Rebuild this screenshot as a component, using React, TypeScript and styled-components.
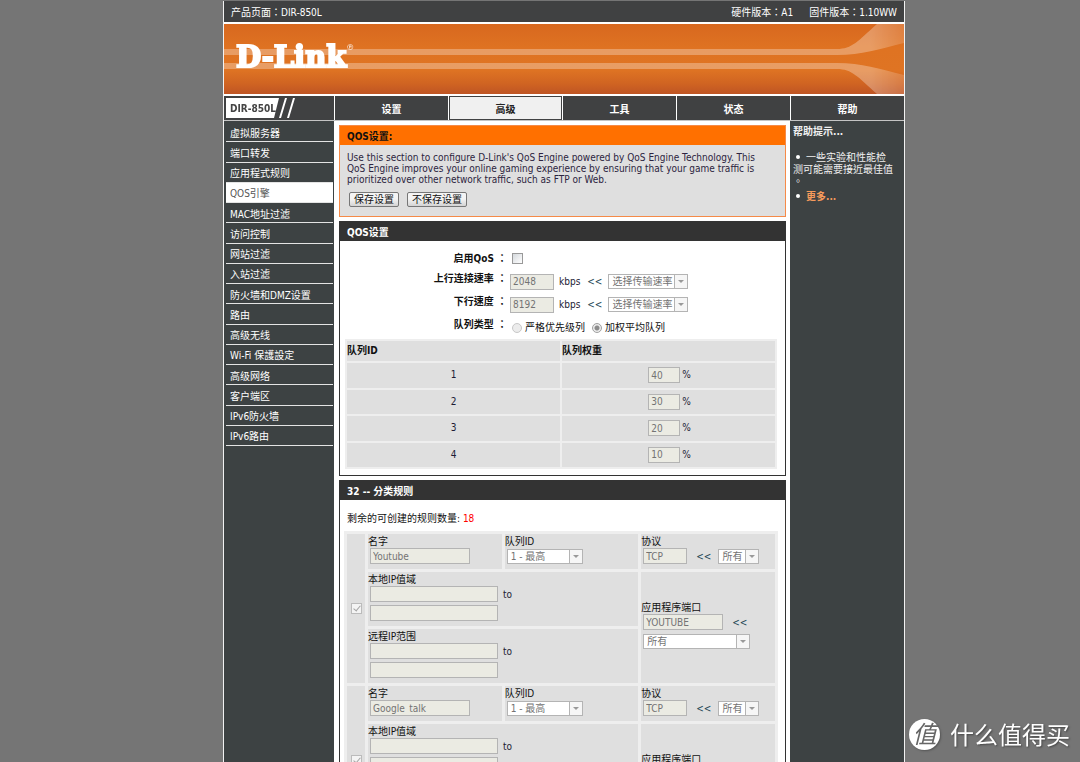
import React from "react";
import styled, { createGlobalStyle, css } from "styled-components";

const latin = '"DejaVu Sans Condensed", "DejaVu Sans"';
const fontSC = `${latin}, "Noto Sans CJK SC", sans-serif`;
const fontTC = `${latin}, "Noto Sans CJK TC", sans-serif`;

const colors = {
  page: "#757575",
  dark: "#404142",
  side: "#3d4243",
  heading: "#333333",
  orange: "#ff7000",
  orangeEdge: "#f58a48",
  panel: "#dfdfdf",
  tableEdge: "#eeeeee",
  field: "#ebebe3",
  fieldEdge: "#b4b4b4",
  muted: "#737373",
};

const GlobalStyle = createGlobalStyle`
  * { box-sizing: border-box; }
  html, body { margin: 0; padding: 0; background: ${colors.page}; }
  body, button, input, select {
    font-family: ${fontSC};
    font-size: 10px;
    line-height: 12px;
  }
`;

const Screen = styled.div`
  height: 100vh;
  overflow-y: auto;
  scrollbar-width: none;
  padding: 1px 0 0 48px;
`;

const Shell = styled.div`
  width: 100%;
  max-width: 682px;
  min-height: 100%;
  margin: 0 auto;
  display: flex;
  flex-direction: column;
  background: #fff;
  border: solid #f2f2f2;
  border-width: 0 1px;
`;

const TopBar = styled.header`
  display: flex;
  align-items: center;
  height: 21px;
  padding: 2px 7px 0;
  gap: 16px;
  background: ${colors.dark};
  color: #fff;
  font-family: ${fontTC};
`;

const Product = styled.span`
  flex: 1;
`;

const Banner = styled.div`
  position: relative;
  height: 70px;
  margin: 2px 0;
  background: linear-gradient(#d8681f 0%, #df7322 35%, #df7423 65%, #d06422 85%, #bf5524 100%);
`;

const Swoosh = styled.svg`
  position: absolute;
  inset: 0;
  width: 100%;
  height: 100%;
`;

const Logo = styled.a`
  position: relative;
  display: inline-flex;
  align-items: flex-start;
  padding: 15px 0 0 12px;
  color: #fff;
  text-decoration: none;
  font-family: "DejaVu Serif", serif;
  font-weight: 700;
  font-size: 29px;
  line-height: 36px;
  -webkit-text-stroke: 2px #fff;
`;

const Registered = styled.sup`
  font-size: 8px;
  line-height: 18px;
  font-weight: 400;
  -webkit-text-stroke: 0;
`;

const Nav = styled.nav`
  display: grid;
  grid-template-columns: 110px repeat(5, 1fr);
  column-gap: 1px;
  height: 24px;
  background: #fff;
`;

const Model = styled.div`
  position: relative;
  background: ${colors.dark};
  display: flex;
  align-items: center;
`;

const ModelShape = styled.svg`
  position: absolute;
  left: 0;
  top: 0;
`;

const ModelName = styled.span`
  position: relative;
  padding: 1px 0 0 6px;
  color: #444;
  font-weight: 700;
`;

const NavLink = styled.a<{ $active?: boolean }>`
  display: flex;
  align-items: center;
  justify-content: center;
  padding-top: 3px;
  border: 1px solid ${colors.dark};
  background: ${(p) => (p.$active ? "#f0f0f0" : colors.dark)};
  color: ${(p) => (p.$active ? "#222" : "#fff")};
  font-weight: 700;
  text-decoration: none;
`;

const Columns = styled.div`
  flex: 1;
  display: grid;
  grid-template-columns: 110px minmax(0, 1fr) 114px;
  border-top: 1px solid #c4c4c4;
`;

const Sidebar = styled.aside`
  background: ${colors.side};
  padding: 1px 1px 0 2px;
`;

const Menu = styled.ul`
  list-style: none;
  margin: 0;
  padding: 0;
  height: 324px;
  display: grid;
  grid-auto-rows: 1fr;
`;

const MenuLink = styled.a<{ $active?: boolean }>`
  display: flex;
  align-items: center;
  height: 100%;
  padding: 4px 0 0 4px;
  border-bottom: 1px solid #e4e4e4;
  background: ${(p) => (p.$active ? "#fff" : "transparent")};
  color: ${(p) => (p.$active ? "#555" : "#fff")};
  text-decoration: none;
`;

const Main = styled.main`
  display: flex;
  flex-direction: column;
  gap: 4px;
  padding: 4px 4px 0 5px;
  background: #fff;
`;

const Panel = styled.section<{ $accent?: boolean }>`
  border: 1px solid ${(p) => (p.$accent ? colors.orangeEdge : colors.heading)};
  background: ${(p) => (p.$accent ? colors.panel : "#fff")};
`;

const PanelTitle = styled.h2<{ $accent?: boolean }>`
  margin: 0;
  height: 19px;
  padding: 2px 0 0 7px;
  font-size: 10px;
  line-height: 17px;
  font-weight: 700;
  background: ${(p) => (p.$accent ? colors.orange : colors.heading)};
  color: ${(p) => (p.$accent ? "#111" : "#fff")};
`;

const Intro = styled.div`
  padding: 7px 7px 9px;
  color: #2c2440;
`;

const IntroText = styled.p`
  margin: 0;
  padding-right: 12px;
  line-height: 11px;
`;

const Actions = styled.div`
  display: flex;
  gap: 8px;
  margin: 7px 0 0 2px;
`;

const Button = styled.button`
  height: 15px;
  padding: 0 4px;
  border: 1px solid #777;
  border-radius: 2px;
  background: linear-gradient(#f4f4f4 45%, #d4d4d4);
  color: #111;
  line-height: 12px;
`;

const Form = styled.form`
  padding: 6px 0 0;
`;

const Row = styled.div<{ $center?: boolean }>`
  display: flex;
  height: 23px;
  gap: 3px;
  align-items: center;
  ${(p) =>
    !p.$center &&
    css`
      & > :first-child {
        align-self: flex-start;
      }
    `}
`;

const Label = styled.label`
  flex: 0 0 167px;
  text-align: right;
  font-family: ${fontTC};
  font-weight: 700;
  line-height: 18px;
  color: #111;
`;

const Controls = styled.div`
  display: flex;
  align-items: center;
`;

const RadioLabel = styled.label`
  display: flex;
  align-items: center;
  gap: 3px;
  margin-right: 5px;
  padding-left: 2px;
  color: #111;
`;

const Input = styled.input<{ $w: number }>`
  width: ${(p) => p.$w}px;
  height: 16px;
  padding: 0 2px;
  border: 1px solid ${colors.fieldEdge};
  border-radius: 0;
  background: ${colors.field};
  color: ${colors.muted};
  font-family: ${latin}, sans-serif;
  line-height: 14px;
`;

const Unit = styled.span`
  margin-left: 5px;
  padding-top: 1px;
  color: #1c1c34;
`;

const Arrows = styled.span<{ $tight?: boolean }>`
  margin: ${(p) => (p.$tight ? "0 6px 0 7px" : "0 7px 0 9px")};
  padding-top: 1px;
  color: #1d4654;
`;

const Check = styled.input`
  appearance: none;
  display: block;
  width: 11px;
  height: 11px;
  margin: 0 2px;
  border: 1px solid #999;
  background: linear-gradient(135deg, #d4d8dc, #fff);
`;

const RuleCheck = styled(Check)`
  margin: 0 auto;
  border-color: #bbb;
  background: #f4f4f4;
  &:checked::before {
    content: "";
    display: block;
    width: 3px;
    height: 6px;
    margin: 0 0 0 3px;
    border: solid #a4a4a4;
    border-width: 0 1px 1px 0;
    transform: rotate(40deg);
  }
`;

const Radio = styled.input`
  appearance: none;
  width: 10px;
  height: 10px;
  margin: 0;
  border: 1px solid #c8c8c8;
  border-radius: 50%;
  background: #ececec;
  &:checked {
    border-color: #a0a0a0;
    background: radial-gradient(circle, #8c8c8c 0 2px, #ececec 3px);
  }
`;

const SelectBox = styled.span<{ $w: number }>`
  position: relative;
  display: inline-flex;
  width: ${(p) => p.$w}px;
  height: 15px;
`;

const NativeSelect = styled.select`
  appearance: none;
  width: 100%;
  height: 100%;
  padding: 1px 14px 0 3px;
  border: 1px solid ${colors.fieldEdge};
  border-radius: 0;
  background: #fff;
  color: ${colors.muted};
  opacity: 1;
`;

const DropMark = styled.span`
  position: absolute;
  right: 0;
  top: 0;
  width: 14px;
  height: 15px;
  display: flex;
  align-items: center;
  justify-content: center;
  border: 1px solid ${colors.fieldEdge};
  background: #f6f6f6;
  pointer-events: none;
  &::before {
    content: "";
    border: 3px solid transparent;
    border-top-color: #999;
    border-bottom: 0;
  }
`;

const WeightTable = styled.table`
  width: calc(100% - 13px);
  height: 130px;
  margin: 0 8px 6px 5px;
  table-layout: fixed;
  border-collapse: separate;
  border-spacing: 2px;
  background: ${colors.tableEdge};
  color: #1c1c34;
  th,
  td {
    padding: 0;
    background: ${colors.panel};
    text-align: center;
  }
  th {
    height: 20px;
    text-align: left;
    color: #111;
  }
`;

const Weight = styled.span`
  display: inline-flex;
  align-items: center;
  gap: 2px;
  padding-left: 2px;
`;

const Remaining = styled.p`
  margin: 0;
  padding: 13px 7px 6px;
  color: #111;
`;

const Count = styled.span`
  color: #f00;
`;

const RuleTable = styled.table`
  width: calc(100% - 11px);
  margin: 0 7px 6px 4px;
  table-layout: fixed;
  border-collapse: separate;
  border-spacing: 3px;
  background: ${colors.tableEdge};
  color: #111;
  td {
    padding: 2px 0 0;
    background: ${colors.panel};
    vertical-align: top;
  }
`;

const CheckCol = styled.col`
  width: 18px;
`;

const ShortRow = styled.tr`
  height: 35px;
`;

const TallRow = styled.tr`
  height: 54px;
`;

const MiddleCell = styled.td`
  && {
    padding: 0;
    vertical-align: middle;
  }
`;

const PortCell = styled.td`
  && {
    padding: 0 0 4px;
    vertical-align: middle;
  }
`;

const Caption = styled.label`
  display: block;
  height: 12px;
`;

const Line = styled.div`
  display: flex;
  align-items: center;
  height: 16px;
  padding-left: 2px;
  & + & {
    margin-top: 3px;
  }
`;

const Help = styled.aside`
  padding: 5px 9px 0 3px;
  background: ${colors.side};
  color: #f0f0f0;
  font-family: ${fontTC};
`;

const HelpTitle = styled.h3`
  margin: 0 0 14px;
  font-size: 10px;
  line-height: 12px;
`;

const HelpList = styled.ul`
  list-style: none;
  margin: 0;
  padding: 0;
  display: grid;
  gap: 3px;
`;

const HelpItem = styled.li`
  line-break: anywhere;
  &::before {
    content: "";
    display: inline-block;
    width: 4px;
    height: 4px;
    margin: 0 6px 2px 3px;
    border-radius: 50%;
    background: #fff;
  }
`;

const MoreLink = styled.a`
  color: #f59a5c;
  font-weight: 700;
  text-decoration: none;
`;

const Watermark = styled.div`
  position: fixed;
  right: 10px;
  bottom: 11px;
  display: flex;
  align-items: center;
  gap: 10px;
  color: #fff;
  font-family: "Noto Sans CJK SC", sans-serif;
  font-size: 24px;
  line-height: 32px;
  text-shadow: 1px 1px 2px #444;
`;

const WatermarkText = styled.span`
  padding-bottom: 1px;
`;

const Seal = styled.span`
  width: 31px;
  height: 31px;
  border-radius: 50%;
  background: #fff;
  color: #666;
  text-align: center;
  font-style: italic;
  line-height: 28px;
  text-shadow: none;
  box-shadow: 1px 1px 2px #555;
`;

function Select({ id, label, value, width }: { id: string; label: string; value: string; width: number }) {
  return (
    <SelectBox $w={width}>
      <NativeSelect id={id} aria-label={label} disabled>
        <option>{value}</option>
      </NativeSelect>
      <DropMark />
    </SelectBox>
  );
}

const menu = [
  "虚拟服务器", "端口转发", "应用程式规则", "QOS引擎", "MAC地址过滤", "访问控制", "网站过滤", "入站过滤",
  "防火墙和DMZ设置", "路由", "高级无线", "Wi-Fi 保護設定", "高级网络", "客户端区", "IPv6防火墙", "IPv6路由",
];

const tabs = ["设置", "高级", "工具", "状态", "帮助"];

function RateRow({ id, label, value }: { id: string; label: string; value: string }) {
  return (
    <Row>
      <Label htmlFor={id}>{label} ：</Label>
      <Controls>
        <Input id={id} $w={44} defaultValue={value} disabled />
        <Unit>kbps</Unit>
        <Arrows $tight>&lt;&lt;</Arrows>
        <Select id={`${id}-preset`} label={`${label} 选择`} value="选择传输速率" width={80} />
      </Controls>
    </Row>
  );
}

function IpRange({ id, label }: { id: string; label: string }) {
  return (
    <td colSpan={2}>
      <Caption htmlFor={id}>{label}</Caption>
      <Line>
        <Input id={id} $w={128} disabled />
        <Unit>to</Unit>
      </Line>
      <Line>
        <Input aria-label={`${label} to`} $w={128} disabled />
      </Line>
    </td>
  );
}

function Rule({ id, name, port }: { id: string; name: string; port: string }) {
  return (
    <tbody>
      <ShortRow>
        <MiddleCell rowSpan={3}>
          <RuleCheck type="checkbox" aria-label={name} defaultChecked disabled />
        </MiddleCell>
        <td>
          <Caption htmlFor={`${id}-name`}>名字</Caption>
          <Line>
            <Input id={`${id}-name`} $w={100} defaultValue={name} disabled />
          </Line>
        </td>
        <td>
          <Caption htmlFor={`${id}-queue`}>队列ID</Caption>
          <Line>
            <Select id={`${id}-queue`} label="队列ID" value="1 - 最高" width={76} />
          </Line>
        </td>
        <td>
          <Caption htmlFor={`${id}-proto`}>协议</Caption>
          <Line>
            <Input id={`${id}-proto`} $w={44} defaultValue="TCP" disabled />
            <Arrows>&lt;&lt;</Arrows>
            <Select id={`${id}-proto-all`} label="协议 选择" value="所有" width={41} />
          </Line>
        </td>
      </ShortRow>
      <TallRow>
        <IpRange id={`${id}-local`} label="本地IP值域" />
        <PortCell rowSpan={2}>
          <Caption htmlFor={`${id}-port`}>应用程序端口</Caption>
          <Line>
            <Input id={`${id}-port`} $w={80} defaultValue={port} disabled />
            <Arrows>&lt;&lt;</Arrows>
          </Line>
          <Line>
            <Select id={`${id}-port-all`} label="应用程序端口 选择" value="所有" width={107} />
          </Line>
        </PortCell>
      </TallRow>
      <TallRow>
        <IpRange id={`${id}-remote`} label="远程IP范围" />
      </TallRow>
    </tbody>
  );
}

export default function App() {
  return (
    <>
      <GlobalStyle />
      <Screen>
        <Shell>
          <TopBar>
            <Product>产品页面：DIR-850L</Product>
            <span>硬件版本：A1</span>
            <span>固件版本：1.10WW</span>
          </TopBar>
          <Banner>
            <Swoosh aria-hidden="true">
              <defs>
                <linearGradient id="flare" x1="0" x2="1" y1="0" y2="0">
                  <stop offset="0" stopColor="#fff" />
                  <stop offset="0.5" stopColor="#fff" />
                  <stop offset="1" stopColor="#fff" stopOpacity="0.5" />
                </linearGradient>
              </defs>
              <g opacity="0.3">
                <svg width="100%" height="70" x="-67">
                  <rect y="25" width="100%" height="6" fill="#fff" />
                  <rect y="39" width="100%" height="6" fill="#fff" />
                </svg>
                <svg x="100%" overflow="visible">
                  <path d="M-67 25 C-52 25 -46 17 -27 0 H0 V19 C-25 25 -42 31 -67 31 Z" fill="url(#flare)" />
                  <path d="M-67 45 C-52 45 -46 53 -27 70 H0 V51 C-25 45 -42 39 -67 39 Z" fill="url(#flare)" />
                </svg>
              </g>
            </Swoosh>
            <Logo href="#">
              D-Link<Registered>®</Registered>
            </Logo>
          </Banner>
          <Nav>
            <Model>
              <ModelShape width="110" height="24" aria-hidden="true">
                <path d="M2 2 H55 L50 22 H2 Z M61 2 H63 L57 22 H55 Z M69 2 H71 L65 22 H63 Z" fill="#fff" />
              </ModelShape>
              <ModelName>DIR-850L</ModelName>
            </Model>
            {tabs.map((t) => (
              <NavLink key={t} href="#" $active={t === "高级"}>
                {t}
              </NavLink>
            ))}
          </Nav>
          <Columns>
            <Sidebar>
              <Menu>
                {menu.map((m) => (
                  <li key={m}>
                    <MenuLink href="#" $active={m === "QOS引擎"}>
                      {m}
                    </MenuLink>
                  </li>
                ))}
              </Menu>
            </Sidebar>
            <Main>
              <Panel $accent>
                <PanelTitle $accent>QOS设置:</PanelTitle>
                <Intro>
                  <IntroText>
                    Use this section to configure D-Link's QoS Engine powered by QoS Engine Technology. This QoS Engine
                    improves your online gaming experience by ensuring that your game traffic is prioritized over other
                    network traffic, such as FTP or Web.
                  </IntroText>
                  <Actions>
                    <Button type="button">保存设置</Button>
                    <Button type="button">不保存设置</Button>
                  </Actions>
                </Intro>
              </Panel>
              <Panel>
                <PanelTitle>QOS设置</PanelTitle>
                <Form>
                  <Row $center>
                    <Label htmlFor="qos">启用QoS ：</Label>
                    <Check type="checkbox" id="qos" />
                  </Row>
                  <RateRow id="up" label="上行连接速率" value="2048" />
                  <RateRow id="down" label="下行速度" value="8192" />
                  <Row>
                    <Label as="span">队列类型 ：</Label>
                    <Controls>
                      <RadioLabel>
                        <Radio type="radio" name="queue" disabled />
                        严格优先级列
                      </RadioLabel>
                      <RadioLabel>
                        <Radio type="radio" name="queue" defaultChecked disabled />
                        加权平均队列
                      </RadioLabel>
                    </Controls>
                  </Row>
                </Form>
                <WeightTable>
                  <thead>
                    <tr>
                      <th>队列ID</th>
                      <th>队列权重</th>
                    </tr>
                  </thead>
                  <tbody>
                    {[40, 30, 20, 10].map((w, i) => (
                      <tr key={w}>
                        <td>{i + 1}</td>
                        <td>
                          <Weight>
                            <Input aria-label={`队列权重 ${i + 1}`} $w={32} defaultValue={w} disabled />%
                          </Weight>
                        </td>
                      </tr>
                    ))}
                  </tbody>
                </WeightTable>
              </Panel>
              <Panel>
                <PanelTitle>32 -- 分类规则</PanelTitle>
                <Remaining>
                  剩余的可创建的规则数量: <Count>18</Count>
                </Remaining>
                <RuleTable>
                  <colgroup>
                    <CheckCol />
                    <col />
                    <col />
                    <col />
                  </colgroup>
                  <Rule id="r1" name="Youtube" port="YOUTUBE" />
                  <Rule id="r2" name="Google_talk" port="GOOGLE_TALK" />
                </RuleTable>
              </Panel>
            </Main>
            <Help>
              <HelpTitle>帮助提示...</HelpTitle>
              <HelpList>
                <HelpItem>一些实验和性能检测可能需要接近最佳值。</HelpItem>
                <HelpItem>
                  <MoreLink href="#">更多...</MoreLink>
                </HelpItem>
              </HelpList>
            </Help>
          </Columns>
        </Shell>
      </Screen>
      <Watermark>
        <Seal>值</Seal>
        <WatermarkText>什么值得买</WatermarkText>
      </Watermark>
    </>
  );
}
